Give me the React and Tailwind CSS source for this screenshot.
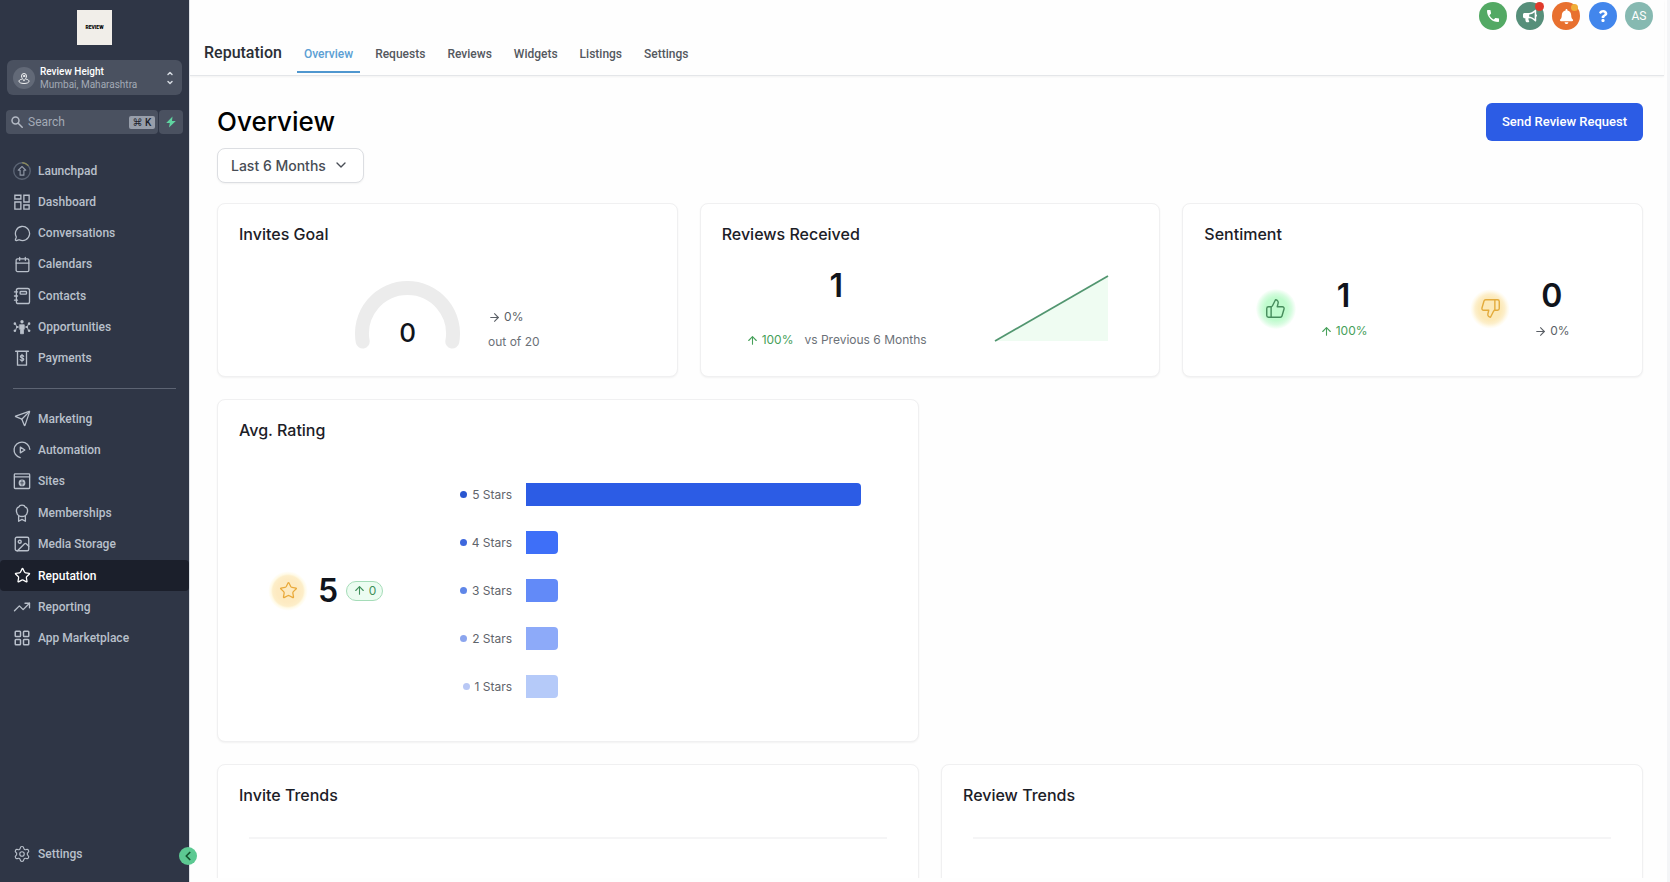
import { useState } from "react";
import {
    ArrowRight,
    ArrowUp,
    Calendar,
    ChevronDown,
    ChevronLeft,
    Image,
    LayoutGrid,
    MessageCircle,
    Send,
    Settings,
    Star,
    ThumbsDown,
    ThumbsUp,
    TrendingUp,
} from "lucide-react";
import { FaBell, FaBullhorn, FaQuestion } from "react-icons/fa";
import { MdPhone } from "react-icons/md";

/* ---------- icons that the packages do not have ---------- */

const Svg = ({ children, className = "size-[18px]" }) => (
    <svg
        className={className}
        viewBox="0 0 24 24"
        fill="none"
        stroke="currentColor"
        strokeWidth="1.8"
        strokeLinecap="round"
        strokeLinejoin="round"
        aria-hidden="true"
    >
        {children}
    </svg>
);

const LaunchpadIcon = () => (
    <Svg>
        <circle cx="12" cy="12" r="11" stroke="#5b6474" />
        <path d="M13 1a11 11 0 0 1 7 3.500" stroke="#8a8a5c" />
        <path d="M12 6l5 5h-2.500v6.500h-5V11H7z" stroke="#9098a6" strokeWidth="1.500" />
    </Svg>
);

const DashboardIcon = () => (
    <Svg>
        <path d="M2.500 3h8v5h-8zM14.500 3h7v9h-7zM2.500 12h8v9.500h-8zM14.500 16h7v5.500h-7z" strokeLinejoin="miter" />
    </Svg>
);

const ContactsIcon = () => (
    <Svg>
        <rect x="4.500" y="2" width="17.500" height="20" rx="2.500" />
        <rect x="9.500" y="6" width="8.500" height="3.500" rx="1" />
        <path d="M2 6.500h4M2 12h4M2 17.500h4" />
    </Svg>
);

const OpportunitiesIcon = () => (
    <Svg>
        <circle cx="12" cy="5" r="2.200" fill="currentColor" stroke="none" />
        <path d="M9 9h6v6h-1v6h-4v-6H9z" fill="currentColor" strokeWidth="1" />
        <path d="M8 12H5M16 12h3M5 12L3.500 8M5 12l-1.500 4.500M19 12l1.500-4M19 12l1.500 4.500" strokeWidth="1.200" />
        <g fill="currentColor" stroke="none">
            <circle cx="2.500" cy="7.500" r="1.700" />
            <circle cx="2.500" cy="17" r="1.700" />
            <circle cx="21.500" cy="7.500" r="1.700" />
            <circle cx="21.500" cy="17" r="1.700" />
            <circle cx="5.500" cy="12" r="1.400" />
            <circle cx="18.500" cy="12" r="1.400" />
        </g>
    </Svg>
);

const PaymentsIcon = () => (
    <Svg>
        <path d="M3.500 3h17M6 3v18.500h12V3" />
        <path d="M14.200 9.800c-.3-.9-1.100-1.300-2.200-1.300-1.300 0-2.200.6-2.200 1.600 0 2.300 4.600 1.200 4.600 3.600 0 1.100-1 1.800-2.400 1.800-1.200 0-2.100-.5-2.400-1.400M12 7v10" strokeWidth="1.600" />
    </Svg>
);

const AutomationIcon = () => (
    <Svg>
        <path d="M9.500 22.200A10.500 10.500 0 1 1 22.400 11" />
        <path d="M9.800 8.200v7.600l6-3.800z" />
    </Svg>
);

const SitesIcon = () => (
    <Svg>
        <rect x="1.800" y="2.500" width="20.400" height="19.500" rx="1" />
        <path d="M2 6.500h20" />
        <circle cx="12" cy="14.500" r="4.500" fill="currentColor" stroke="none" />
        <path d="M12 11.500v6M10 14.500h4" stroke="#2f3646" strokeWidth="1" />
    </Svg>
);

const MembershipsIcon = () => (
    <Svg>
        <path d="M9 2.200c2-.9 4-.9 6 0 .6 1.500 1.500 2.300 3.200 2.800 1.300 2 1.600 4.200.8 6.400-.2 1.800-1 3-2.500 4-3 1.700-6 1.700-9 0-1.500-1-2.300-2.200-2.500-4-.8-2.200-.5-4.400.8-6.400C7.500 4.500 8.400 3.700 9 2.200z" />
        <path d="M7.500 16.500V23l4.500-2.500 4.500 2.500v-6.500" />
    </Svg>
);

const LocationIcon = () => (
    <Svg className="size-3">
        <path d="M12 17c-3-3-5-6-5-9a5 5 0 0 1 10 0c0 3-2 6-5 9z" />
        <circle cx="12" cy="8" r="1.500" />
        <path d="M7 14.500C4 15 2 16.500 2 18.500 2 21 6 23 12 23s10-2 10-4.500c0-2-2-3.500-5-4" />
    </Svg>
);

const SortIcon = () => (
    <svg className="h-3.5 w-2" viewBox="0 0 8 14" fill="none" stroke="#d5dae1" strokeWidth="1.5" strokeLinecap="round" strokeLinejoin="round" aria-hidden="true">
        <path d="M2 3.500L4 1.500 6 3.500M2 10.500L4 12.500 6 10.500" />
    </svg>
);

const mainLinks = [
    { name: "Launchpad", icon: <LaunchpadIcon /> },
    { name: "Dashboard", icon: <DashboardIcon /> },
    { name: "Conversations", icon: <MessageCircle size={17} strokeWidth={1.8} /> },
    { name: "Calendars", icon: <Calendar size={17} strokeWidth={1.8} /> },
    { name: "Contacts", icon: <ContactsIcon /> },
    { name: "Opportunities", icon: <OpportunitiesIcon /> },
    { name: "Payments", icon: <PaymentsIcon /> },
];

const toolLinks = [
    { name: "Marketing", icon: <Send size={17} strokeWidth={1.8} /> },
    { name: "Automation", icon: <AutomationIcon /> },
    { name: "Sites", icon: <SitesIcon /> },
    { name: "Memberships", icon: <MembershipsIcon /> },
    { name: "Media Storage", icon: <Image size={18} strokeWidth={1.8} /> },
    { name: "Reputation", icon: <Star size={17} strokeWidth={1.8} /> },
    { name: "Reporting", icon: <TrendingUp size={18} strokeWidth={1.8} /> },
    { name: "App Marketplace", icon: <LayoutGrid size={18} strokeWidth={2} /> },
];

const tabs = ["Overview", "Requests", "Reviews", "Widgets", "Listings", "Settings"];

const ratings = [
    { stars: 5, percent: 100, dot: "bg-[#2a56d0]", bar: "bg-[#2c5ce5]" },
    { stars: 4, percent: 0, dot: "bg-[#3d67dd]", bar: "bg-[#3e6ff8]" },
    { stars: 3, percent: 0, dot: "bg-[#5f86e8]", bar: "bg-[#628af8]" },
    { stars: 2, percent: 0, dot: "bg-[#8ba5ee]", bar: "bg-[#8daaf9]" },
    { stars: 1, percent: 0, dot: "bg-[#b9c8f5]", bar: "bg-[#b5caf9]" },
];

const NavLink = ({ link, active }) => (
    <a
        href="#"
        className={`flex items-center gap-[7px] rounded pl-[13px] text-xs font-medium ${active ? "bg-[#1b1f2b] text-white" : "text-[#b9c0cb]"}`}
    >
        <span className="flex w-[18px] justify-center">{link.icon}</span>
        {link.name}
    </a>
);

const Sidebar = () => (
    <aside className="relative flex w-[190px] shrink-0 flex-col border-r border-[#dfe3e8] bg-[#2f3646] font-[Roboto,sans-serif]">
        <div className="mx-auto mt-2.5 flex size-[35px] shrink-0 items-center justify-center bg-[#f1eee9] text-[5px] font-black text-black">
            REVIEW
        </div>

        <button className="mx-[7px] mt-[15px] flex h-[35px] shrink-0 items-center rounded-md bg-[#4a5160] pr-2 pl-1.5 text-left">
            <span className="flex size-[22px] items-center justify-center rounded-full bg-[#626977] text-white">
                <LocationIcon />
            </span>
            <span className="ml-[5px] flex-1 text-[10px] leading-[13px]">
                <span className="block font-medium text-white">Review Height</span>
                <span className="block text-[#a3aab6]">Mumbai, Maharashtra</span>
            </span>
            <SortIcon />
        </button>

        <div className="mx-1.5 mt-[15px] flex h-6 shrink-0 gap-px">
            <label className="flex flex-1 items-center rounded bg-[#4a5160] pr-[3px] pl-[5px]">
                <svg className="size-3" viewBox="0 0 12 12" fill="none" stroke="#b4bac5" strokeWidth="1.5" strokeLinecap="round" aria-hidden="true">
                    <circle cx="4.500" cy="4.500" r="3.500" />
                    <path d="M7.200 7.200l4 4" />
                </svg>
                <input
                    type="text"
                    aria-label="Search"
                    placeholder="Search"
                    className="ml-[5px] w-0 flex-1 bg-transparent text-xs text-white placeholder:text-[#a3aab6] focus:outline-none"
                />
                <kbd className="flex h-[13px] w-[26px] items-center justify-center rounded-xs bg-[#979eaa] font-[Roboto,'DejaVu_Sans',sans-serif] text-[10px] font-medium text-[#1b202b]">
                    ⌘ K
                </kbd>
            </label>
            <button aria-label="Quick actions" className="flex w-6 items-center justify-center rounded bg-[#4a5160]">
                <svg className="size-3" viewBox="0 0 12 12" fill="#5fd3a0" aria-hidden="true">
                    <path d="M7.500 .5L1.200 7h3.600L4 11.500 10.800 5H7z" />
                </svg>
            </button>
        </div>

        <nav className="mt-[21px] flex flex-col">
            <div className="grid h-[219px] auto-rows-fr">
                {mainLinks.map((link) => (
                    <NavLink key={link.name} link={link} />
                ))}
            </div>
            <hr className="mx-[13px] my-3.5 border-[#5d6473]" />
            <div className="grid h-[251px] auto-rows-fr">
                {toolLinks.map((link) => (
                    <NavLink key={link.name} link={link} active={link.name === "Reputation"} />
                ))}
            </div>
        </nav>

        <div className="mt-auto mb-3 grid h-8">
            <NavLink link={{ name: "Settings", icon: <Settings size={18} strokeWidth={1.5} /> }} />
        </div>
        <button
            aria-label="Collapse menu"
            className="absolute -right-2 bottom-[17px] z-10 flex size-[18px] items-center justify-center rounded-full bg-[#5cc992] text-[#14532d]"
        >
            <ChevronLeft size={14} strokeWidth={3} />
        </button>
    </aside>
);

const Header = () => {
    const [active, setActive] = useState("Overview");

    return (
        <header className="mr-[3px] flex h-[76px] shrink-0 items-end justify-between border-b border-[#e4e6e9] pl-3.5 font-[Roboto,sans-serif] shadow-xs">
            <div className="flex items-end gap-[15px]">
                <h2 className="pb-3 text-base leading-5 font-medium text-[#2b2f36]">Reputation</h2>
                <nav className="mb-0.5 flex gap-2">
                    {tabs.map((tab) => (
                        <button
                            key={tab}
                            onClick={() => setActive(tab)}
                            className={`h-8 border-b-2 px-[7px] pb-1 text-xs font-medium ${active === tab ? "border-[#4f97cf] text-[#5b9fd4]" : "border-transparent text-[#54585e]"}`}
                        >
                            {tab}
                        </button>
                    ))}
                </nav>
            </div>

            <div className="mr-[11px] flex w-[174px] justify-between self-start pt-0.5 text-white">
                <button aria-label="Call" className="flex size-7 items-center justify-center rounded-full bg-[#53a964]">
                    <MdPhone size={16} />
                </button>
                <button aria-label="Announcements" className="relative flex size-7 items-center justify-center rounded-full bg-[#568f7a]">
                    <FaBullhorn size={14} />
                    <span className="absolute top-0 right-0 size-[9px] rounded-full bg-[#e03a2b]" />
                </button>
                <button aria-label="Notifications" className="relative flex size-7 items-center justify-center rounded-full bg-[#e8702f]">
                    <FaBell size={15} />
                    <span className="absolute top-0.5 right-0.5 size-[7px] rounded-full bg-[#f0ad38]" />
                </button>
                <button aria-label="Help" className="flex size-7 items-center justify-center rounded-full bg-[#4286ec]">
                    <FaQuestion size={12} />
                </button>
                <button aria-label="Account" className="flex size-7 items-center justify-center rounded-full bg-[#86b9b1] text-xs">
                    AS
                </button>
            </div>
        </header>
    );
};

const Card = ({ title, className = "", children }) => (
    <section className={`flex flex-col rounded-lg border border-[#f0f0f1] bg-white px-[21px] pt-[18px] shadow-xs ${className}`}>
        <h3 className="text-base leading-6 font-medium text-[#1c2027]">{title}</h3>
        {children}
    </section>
);

const Change = ({ up, value }) => (
    <span className={`flex items-center gap-[3px] text-xs leading-5 ${up ? "text-[#46a05a]" : "text-[#5a5f66]"}`}>
        {up ? <ArrowUp size={13} /> : <ArrowRight size={13} />}
        {value}
    </span>
);

const App = () => {
    const [range, setRange] = useState("Last 6 Months");

    return (
        <div className="flex h-screen overflow-hidden bg-[#fefefe] font-[Inter,sans-serif]">
            <Sidebar />

            <div className="flex min-w-0 flex-1 flex-col border-r-[3px] border-[#f4f5f7] pb-1">
                <Header />

                <main className="flex min-h-0 flex-1 flex-col overflow-hidden pt-[27px] pr-6 pl-[27px]">
                    <div className="flex items-center justify-between">
                        <h1 className="text-[26px] leading-[38px] font-medium text-black">Overview</h1>
                        <button className="h-[38px] w-[157px] rounded-md bg-[#2c5ce5] font-[Roboto,sans-serif] text-[13px] font-medium text-white">
                            Send Review Request
                        </button>
                    </div>

                    <div className="relative mt-[7px] w-[147px] shrink-0">
                        <select
                            aria-label="Date range"
                            value={range}
                            onChange={(e) => setRange(e.target.value)}
                            className="h-[35px] w-full appearance-none rounded-lg border border-[#dcdee2] bg-white pl-[13px] text-sm font-medium text-[#484d55] shadow-xs"
                        >
                            <option>Last 6 Months</option>
                            <option>Last 12 Months</option>
                        </select>
                        <ChevronDown size={16} className="pointer-events-none absolute top-[9px] right-[15px] text-[#484d55]" />
                    </div>

                    <div className="mt-5 grid shrink-0 grid-cols-3 gap-[22px]">
                        <Card title="Invites Goal" className="h-[174px]">
                            <div className="mt-[35px] flex justify-center gap-7">
                                <div className="relative">
                                    <svg className="h-[68px] w-[105px]" viewBox="0 0 105 68" fill="none" stroke="#ececec" strokeWidth="14" strokeLinecap="round" aria-hidden="true">
                                        <path d="M7.700 60.500A45.500 45.500 0 1 1 97.300 60.500" />
                                    </svg>
                                    <p className="absolute inset-x-0 top-9 text-center text-[26px] leading-8 font-medium text-[#10141c]">0</p>
                                </div>
                                <div className="pt-[26px]">
                                    <Change value="0%" />
                                    <p className="mt-[5px] text-xs leading-5 text-[#6c7178]">out of 20</p>
                                </div>
                            </div>
                        </Card>

                        <Card title="Reviews Received">
                            <div className="mt-5 flex gap-[67px] pl-6">
                                <div className="flex flex-col items-center">
                                    <p className="text-[32px] leading-10 font-semibold text-[#10141c]">1</p>
                                    <div className="mt-6 flex gap-[11px]">
                                        <Change up value="100%" />
                                        <span className="text-xs leading-5 text-[#6c7178]">vs Previous 6 Months</span>
                                    </div>
                                </div>
                                <svg className="mt-[9px] h-[68px] w-[115px]" viewBox="0 0 115 68" aria-hidden="true">
                                    <path d="M1 66L114 1v65z" fill="#effcf2" />
                                    <path d="M1 66L114 1" stroke="#529670" strokeWidth="1.800" />
                                </svg>
                            </div>
                        </Card>

                        <Card title="Sentiment">
                            <div className="mt-[30px] flex justify-around">
                                <div className="flex items-center gap-6">
                                    <span className="flex size-10 items-center justify-center rounded-full bg-[radial-gradient(#c0fbce_40%,#d7fce0_55%,#f1fef4_66%,transparent_72%)] text-[#468c5c]">
                                        <ThumbsUp size={21} strokeWidth={1.6} />
                                    </span>
                                    <div className="flex flex-col items-center gap-[5px]">
                                        <p className="text-[32px] leading-10 font-semibold text-[#10141c]">1</p>
                                        <Change up value="100%" />
                                    </div>
                                </div>
                                <div className="flex items-center gap-6">
                                    <span className="flex size-10 items-center justify-center rounded-full bg-[radial-gradient(#fce9b8_40%,#fdefcb_52%,#fffaeb_62%,transparent_70%)] text-[#e3ab3c]">
                                        <ThumbsDown size={21} strokeWidth={1.6} />
                                    </span>
                                    <div className="flex flex-col items-center gap-[5px]">
                                        <p className="text-[32px] leading-10 font-semibold text-[#10141c]">0</p>
                                        <Change value="0%" />
                                    </div>
                                </div>
                            </div>
                        </Card>
                    </div>

                    <div className="mt-[22px] grid shrink-0 grid-cols-2 gap-[22px]">
                        <Card title="Avg. Rating" className="h-[343px]">
                            <div className="mt-[41px] flex items-center pr-9 pl-[29px]">
                                <div className="flex items-center">
                                    <span className="flex size-10 items-center justify-center rounded-full bg-[radial-gradient(#fdeac1_40%,#fdeec9_54%,#fffae6_60%,transparent_70%)] text-[#e9a93a]">
                                        <Star size={19} strokeWidth={1.6} />
                                    </span>
                                    <p className="ml-2.5 text-[32px] leading-10 font-semibold text-[#10141c]">5</p>
                                    <span className="ml-2 flex h-5 w-[37px] items-center justify-center gap-[3px] rounded-full border border-[#a5dcb8] bg-[#ecfcf1] text-xs text-[#3f8f5a]">
                                        <ArrowUp size={13} />
                                        0
                                    </span>
                                </div>
                                <ul className="ml-[75px] flex flex-1 flex-col gap-[25px]">
                                    {ratings.map((r) => (
                                        <li key={r.stars} className="flex h-[23px] items-center gap-3.5">
                                            <span className="flex w-[54px] items-center justify-end gap-[5px] text-xs whitespace-nowrap text-[#5f646b]">
                                                <span className={`size-[7px] rounded-full ${r.dot}`} />
                                                {r.stars} Stars
                                            </span>
                                            <span className="flex flex-1">
                                                <span
                                                    className={`h-[23px] min-w-8 rounded-r ${r.bar}`}
                                                    style={{ width: `${r.percent}%` }}
                                                />
                                            </span>
                                        </li>
                                    ))}
                                </ul>
                            </div>
                        </Card>
                    </div>

                    <div className="mt-[22px] grid shrink-0 grid-cols-2 gap-[22px]">
                        <Card title="Invite Trends" className="h-[343px]">
                            <hr className="mx-2.5 mt-[30px] border-t-2 border-[#f5f5f6]" />
                        </Card>
                        <Card title="Review Trends" className="h-[343px]">
                            <hr className="mx-2.5 mt-[30px] border-t-2 border-[#f5f5f6]" />
                        </Card>
                    </div>
                </main>
            </div>
        </div>
    );
};

export default App;
